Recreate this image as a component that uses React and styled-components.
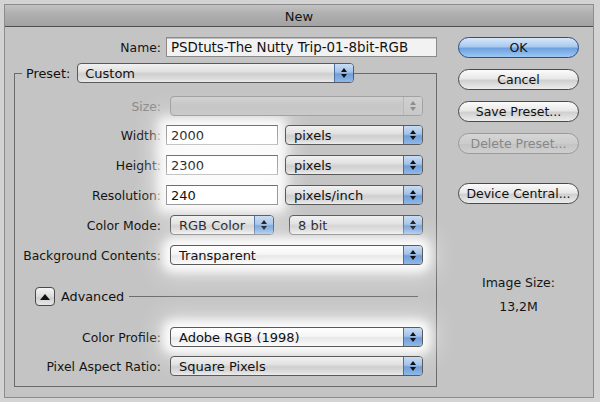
import React from "react";
import styled, { createGlobalStyle, css } from "styled-components";

const Global = createGlobalStyle`
  html, body { margin: 0; padding: 0; background: #d3d3d3; }
  body { font-family: "DejaVu Sans", "Liberation Sans", sans-serif; font-size: 12.4px; color: #111; }
  * { box-sizing: border-box; }
`;

const Page = styled.div`
  width: 600px;
  height: 402px;
  padding: 4px 0 0 4px;
  overflow: hidden;
`;

const Window = styled.div`
  width: 590px;
  height: 394px;
  border: 1px solid #8c8c8c;
  background: #c4c4c4;
  display: flex;
  flex-direction: column;
`;

const TitleBar = styled.div`
  height: 22px;
  flex: none;
  background: linear-gradient(#c2c2c2 0%, #b0b0b0 40%, #a2a2a2 100%);
  border-bottom: 1px solid #4e4e4e;
  display: flex;
  align-items: center;
  justify-content: center;
  font-size: 13px;
  color: #141414;
  padding-top: 1px;
`;

const Body = styled.div`
  flex: 1;
  display: flex;
  padding: 10px 0 0 9px;
`;

const LeftCol = styled.div`
  width: 423px;
  display: flex;
  flex-direction: column;
`;

const RightCol = styled.div`
  margin-left: 21px;
  width: 121px;
  display: flex;
  flex-direction: column;
  align-items: stretch;
`;

const Row = styled.div`
  display: grid;
  grid-template-columns: ${(p) => p.$labelW || 146}px 1fr;
  column-gap: 5px;
  align-items: center;
  height: 20px;
  margin-top: ${(p) => p.$mt || 0}px;
`;

const Label = styled.div`
  text-align: right;
  white-space: nowrap;
  color: ${(p) => (p.$disabled ? "#8a8a8a" : "#141414")};
`;

const Controls = styled.div`
  display: flex;
  align-items: center;
  padding-left: ${(p) => p.$pl || 0}px;
  gap: ${(p) => p.$gap || 0}px;
`;

const glow = css`
  box-shadow: 0 0 10px 7px rgba(255, 255, 255, 0.9), 0 0 24px 12px rgba(255, 255, 255, 0.45);
`;

const TextField = styled.div`
  width: ${(p) => p.$w}px;
  height: 20px;
  background: #fff;
  border: 1px solid #9a9a9a;
  border-top-color: #6e6e6e;
  padding: 0 0 0 4px;
  display: flex;
  align-items: center;
  font-size: 13px;
  color: #111;
  white-space: nowrap;
  ${(p) => p.$glow && glow}
`;

const NameField = styled(TextField)`
  background: #f2f2f2;
  border: 1px solid #8a8a8a;
  box-shadow: inset 0 1px 0 #bdbdbd;
  font-size: 13.4px;
`;

const SelectBox = styled.div`
  position: relative;
  width: ${(p) => p.$w}px;
  height: 20px;
  border-radius: 4px;
  border: 1px solid ${(p) => (p.$disabled ? "#a2a2a2" : "#5a5a5a")};
  background: ${(p) =>
    p.$disabled
      ? "linear-gradient(#d2d2d2, #c6c6c6 50%, #cacaca)"
      : p.$white
      ? "linear-gradient(#ffffff, #f6f6f6 45%, #e8e8e8 55%, #fbfbfb)"
      : "linear-gradient(#f1f1f1 0%, #e2e2e2 40%, #cfcfcf 55%, #dedede 85%, #ececec 100%)"};
  display: flex;
  align-items: center;
  overflow: hidden;
  ${(p) => p.$glow && glow}
`;

const SelectText = styled.div`
  flex: 1;
  padding-left: ${(p) => p.$pl || 8}px;
  white-space: nowrap;
  font-size: 13px;
  color: #111;
`;

const Arrows = styled.div`
  width: 19px;
  height: 100%;
  flex: none;
  border-left: 1px solid ${(p) => (p.$disabled ? "#b8b8b8" : "#4c6fa0")};
  background: ${(p) =>
    p.$disabled
      ? "linear-gradient(#d0d0d0, #c8c8c8)"
      : "linear-gradient(#c9dcf3 0%, #a3c2e9 45%, #6f9fd9 55%, #8fb8ea 100%)"};
  display: flex;
  flex-direction: column;
  align-items: center;
  justify-content: center;
  gap: 2px;
`;

const Tri = styled.div`
  width: 0;
  height: 0;
  border-left: ${(p) => p.$half || 3}px solid transparent;
  border-right: ${(p) => p.$half || 3}px solid transparent;
  ${(p) =>
    p.$down
      ? `border-top: ${p.$h || 4}px solid ${p.$c};`
      : `border-bottom: ${p.$h || 4}px solid ${p.$c};`}
`;

const Select = ({ w, text, disabled, white, glowOn, pl }) => (
  <SelectBox $w={w} $disabled={disabled} $white={white} $glow={glowOn}>
    <SelectText $pl={pl}>{text}</SelectText>
    <Arrows $disabled={disabled}>
      <Tri $c={disabled ? "#8e8e8e" : "#111"} />
      <Tri $down $c={disabled ? "#8e8e8e" : "#111"} />
    </Arrows>
  </SelectBox>
);

const Group = styled.div`
  margin-top: 16px;
  border: 1px solid #6a6a6a;
  height: 314px;
  display: flex;
  flex-direction: column;
`;

const Legend = styled.div`
  display: flex;
  align-items: center;
  margin: -11px 0 0 7px;
  height: 20px;
`;

const LegendLabel = styled.div`
  background: #c4c4c4;
  padding: 0 7px 0 4px;
  font-size: 12.8px;
`;

const AdvancedRow = styled.div`
  display: flex;
  align-items: center;
  margin: 22px 0 0 20px;
  height: 19px;
`;

const DiscloseBtn = styled.div`
  width: 20px;
  height: 19px;
  border: 1px solid #4a4a4a;
  border-radius: 4px;
  background: linear-gradient(#f4f4f4, #dcdcdc 50%, #cfcfcf 55%, #e6e6e6);
  display: flex;
  align-items: center;
  justify-content: center;
`;

const AdvText = styled.div`
  margin-left: 6px;
  font-size: 12.8px;
`;

const Rule = styled.div`
  flex: 1;
  height: 1px;
  background: #6e6e6e;
  margin: 0 18px 0 5px;
  align-self: center;
`;

const Button = styled.div`
  height: 21px;
  border-radius: 11px;
  border: 1px solid ${(p) => (p.$disabled ? "#9a9a9a" : p.$primary ? "#2b4f86" : "#4a4a4a")};
  background: ${(p) =>
    p.$primary
      ? "linear-gradient(#d8e8fa 0%, #a9c9ef 45%, #6fa2e0 55%, #9dc6f4 100%)"
      : p.$disabled
      ? "linear-gradient(#d6d6d6, #cbcbcb 50%, #c4c4c4 55%, #cfcfcf)"
      : "linear-gradient(#fbfbfb 0%, #e8e8e8 45%, #d0d0d0 55%, #ececec 100%)"};
  display: flex;
  align-items: center;
  justify-content: center;
  font-size: 12.5px;
  color: ${(p) => (p.$disabled ? "#878787" : "#111")};
  margin-top: ${(p) => p.$mt || 0}px;
`;

const InfoText = styled.div`
  text-align: center;
  font-size: 12.5px;
  margin-top: ${(p) => p.$mt || 0}px;
  color: #141414;
`;

export default function App() {
  return (
    <>
      <Global />
      <Page>
        <Window>
          <TitleBar>New</TitleBar>
          <Body>
            <LeftCol>
              <Row $labelW={147}>
                <Label>Name:</Label>
                <Controls>
                  <NameField $w={271}>PSDtuts-The Nutty Trip-01-8bit-RGB</NameField>
                </Controls>
              </Row>
              <Group>
                <Legend>
                  <LegendLabel>Preset:</LegendLabel>
                  <Select w={277} text="Custom" pl={7} />
                </Legend>
                <Row $mt={13}>
                  <Label $disabled>Size:</Label>
                  <Controls $pl={4}>
                    <Select w={253} text="" disabled />
                  </Controls>
                </Row>
                <Row $mt={9}>
                  <Label>Width:</Label>
                  <Controls $gap={7}>
                    <TextField $w={112} $glow>2000</TextField>
                    <Select w={138} text="pixels" />
                  </Controls>
                </Row>
                <Row $mt={10}>
                  <Label>Height:</Label>
                  <Controls $gap={7}>
                    <TextField $w={112} $glow>2300</TextField>
                    <Select w={138} text="pixels" />
                  </Controls>
                </Row>
                <Row $mt={10}>
                  <Label>Resolution:</Label>
                  <Controls $gap={7}>
                    <TextField $w={112} $glow>240</TextField>
                    <Select w={138} text="pixels/inch" />
                  </Controls>
                </Row>
                <Row $mt={10}>
                  <Label>Color Mode:</Label>
                  <Controls $pl={4} $gap={15}>
                    <Select w={104} text="RGB Color" />
                    <Select w={134} text="8 bit" />
                  </Controls>
                </Row>
                <Row $mt={10}>
                  <Label>Background Contents:</Label>
                  <Controls $pl={4}>
                    <Select w={253} text="Transparent" white glowOn />
                  </Controls>
                </Row>
                <AdvancedRow>
                  <DiscloseBtn>
                    <Tri $c="#111" $half={5} $h={6} />
                  </DiscloseBtn>
                  <AdvText>Advanced</AdvText>
                  <Rule />
                </AdvancedRow>
                <Row $mt={21}>
                  <Label>Color Profile:</Label>
                  <Controls $pl={4}>
                    <Select w={253} text="Adobe RGB (1998)" white glowOn />
                  </Controls>
                </Row>
                <Row $mt={9}>
                  <Label>Pixel Aspect Ratio:</Label>
                  <Controls $pl={4}>
                    <Select w={253} text="Square Pixels" />
                  </Controls>
                </Row>
              </Group>
            </LeftCol>
            <RightCol>
              <Button $primary>OK</Button>
              <Button $mt={11}>Cancel</Button>
              <Button $mt={11}>Save Preset...</Button>
              <Button $mt={11} $disabled>Delete Preset...</Button>
              <Button $mt={29}>Device Central...</Button>
              <InfoText $mt={71}>Image Size:</InfoText>
              <InfoText $mt={9}>13,2M</InfoText>
            </RightCol>
          </Body>
        </Window>
      </Page>
    </>
  );
}
